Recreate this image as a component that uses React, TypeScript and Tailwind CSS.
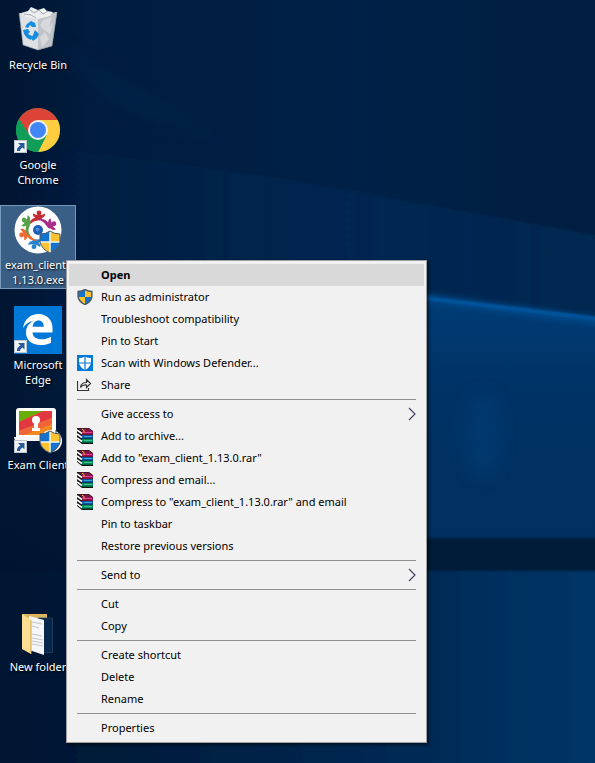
import type { ReactNode } from "react";

function Wallpaper() {
  return (
    <svg className="absolute inset-0 h-full w-full" viewBox="0 0 595 763" preserveAspectRatio="none" aria-hidden="true">
      <defs>
        <linearGradient id="base" x1="0" y1="0" x2="1" y2="0">
          <stop offset="0" stopColor="#001531" />
          <stop offset="0.15" stopColor="#001c3e" />
          <stop offset="0.6" stopColor="#002147" />
          <stop offset="1" stopColor="#001e41" />
        </linearGradient>
        <linearGradient id="haze" x1="0" y1="0" x2="1" y2="0">
          <stop offset="0" stopColor="#003060" stopOpacity="0" />
          <stop offset="0.5" stopColor="#002f60" stopOpacity="0.3" />
          <stop offset="1" stopColor="#003262" stopOpacity="0.5" />
        </linearGradient>
        <linearGradient id="pane" x1="0" y1="0" x2="0" y2="1">
          <stop offset="0" stopColor="#003d77" />
          <stop offset="0.35" stopColor="#003366" />
          <stop offset="1" stopColor="#003060" />
        </linearGradient>
        <linearGradient id="pane2" x1="0" y1="0" x2="1" y2="0">
          <stop offset="0" stopColor="#00152f" />
          <stop offset="0.15" stopColor="#001a38" />
          <stop offset="0.72" stopColor="#002b57" />
          <stop offset="1" stopColor="#003669" />
        </linearGradient>
        <linearGradient id="left" x1="0" y1="0" x2="0" y2="1">
          <stop offset="0" stopColor="#001a38" stopOpacity="0" />
          <stop offset="0.6" stopColor="#001430" stopOpacity="0.9" />
          <stop offset="1" stopColor="#001735" />
        </linearGradient>
        <filter id="wide" x="-100%" y="-100%" width="300%" height="300%">
          <feGaussianBlur stdDeviation="9" />
        </filter>
        <filter id="soft" x="-20%" y="-50%" width="140%" height="200%">
          <feGaussianBlur stdDeviation="3" />
        </filter>
        <filter id="edge" x="-20%" y="-50%" width="140%" height="200%">
          <feGaussianBlur stdDeviation="1" />
        </filter>
      </defs>
      <rect width="595" height="763" fill="url(#base)" />
      <path d="M0 140L280 178L600 236V340H0Z" fill="url(#haze)" filter="url(#edge)" />
      <path d="M50 40L120 82L240 150L110 100Z" fill="#00305c" opacity="0.3" filter="url(#wide)" />
      <rect y="290" width="76" height="473" fill="url(#left)" />
      <path d="M400 294L600 321V539H400Z" fill="url(#pane)" />
      <path d="M400 294L600 321" stroke="#004f94" strokeWidth="6" filter="url(#soft)" />
      <path d="M400 295L600 319" stroke="#0059a3" strokeWidth="3" filter="url(#edge)" />
      <ellipse cx="483" cy="435" rx="17" ry="42" fill="#004480" opacity="0.4" filter="url(#wide)" />
      <rect x="400" y="538" width="200" height="33" fill="#001a38" filter="url(#edge)" />
      <rect x="-10" y="571" width="615" height="202" fill="url(#pane2)" filter="url(#edge)" />
    </svg>
  );
}

function ShortcutArrow() {
  return (
    <g>
      <rect x="0.5" y="34.5" width="12" height="12" fill="#f2f4f6" stroke="#bcc4cc" />
      <path d="M4 37H10.500V43.500L8.500 41.500Q6 42.500 6 45H3Q2.500 41 6.500 39.500Z" fill="#285a9b" />
    </g>
  );
}

function ShieldShape({ line = 1 }: { line?: number }) {
  return (
    <>
      <path d="M10 0Q14 3 20 3V11Q18.500 18 10 22Q1.500 18 0 11V3Q6 3 10 0Z" fill="#ffc32f" />
      <path d="M10 0V11H0V3Q6 3 10 0ZM10 11H20Q18.500 18 10 22Z" fill="#1473cf" />
      {line === 1 && <path d="M10 0V22M0 11H20" stroke="#f3f4ed" strokeWidth="1.500" />}
      <path d="M10 0Q14 3 20 3V11Q18.500 18 10 22Q1.500 18 0 11V3Q6 3 10 0Z" fill="none" stroke="#48596b" strokeWidth={line} />
    </>
  );
}

function DesktopSvg({ children }: { children: ReactNode }) {
  return (
    <svg className="h-12 w-12 shrink-0" viewBox="0 0 48 48" aria-hidden="true">
      {children}
    </svg>
  );
}

function RecycleBinIcon() {
  return (
    <DesktopSvg>
      <path d="M5 7L23 10L43 6L38 40L24 44L9 39Z" fill="#c9cdd2" />
      <path d="M6 7L24 11L24 44L9 39Z" fill="#dfe2e5" />
      <path d="M24 11L43 6L38 40L24 44Z" fill="#c0c4c8" />
      <path d="M7 7L14 5L17 1L24 4L30 2L33 5L39 6L36 10L24 13L13 11Z" fill="#eceeef" />
      <path d="M15 3L20 7L25 4L29 8L34 5M10 8L17 9L22 12" fill="none" stroke="#a7adb3" />
      <path d="M29 14L38 11L35 21L39 17L36 28L29 23L35 33L28 41L26 31L31 26L26 19Z" fill="#dcdfe2" opacity="0.8" />
      <path d="M5 7L9 39L24 44L38 40L43 6" fill="none" stroke="#7b858f" opacity="0.6" />
      <path d="M13 18L17 15L21 17L22 21L18 21L16 19L14 22L11 21ZM9 24L14 23L16 26L14 28L18 30L17 34L13 32L10 28ZM19 29L21 24L25 28L23 32L19 35L17 32Z" fill="#168ce0" />
    </DesktopSvg>
  );
}

function ChromeIcon() {
  return (
    <DesktopSvg>
      <circle cx="24" cy="24" r="22" fill="#0f9d58" />
      <path d="M24 14H43.600A22 22 0 0 1 24 46L32.660 29Z" fill="#ffcd40" />
      <path d="M15.340 29L4.950 13A22 22 0 0 1 43.600 14H24Z" fill="#db4437" />
      <path d="M32.660 29L24 46A22 22 0 0 1 4.950 13L15.340 29L24 34Z" fill="#0f9d58" />
      <circle cx="24" cy="24" r="10" fill="#f1f1f1" />
      <circle cx="24" cy="24" r="8" fill="#4285f4" />
      <ShortcutArrow />
    </DesktopSvg>
  );
}

const people = [
  { angle: 0, color: "#c62b35" },
  { angle: 65, color: "#a72c86" },
  { angle: 190, color: "#2583cf" },
  { angle: 250, color: "#ed6b35" },
  { angle: 302, color: "#54a247" },
];

function ExamExeIcon() {
  return (
    <DesktopSvg>
      <circle cx="24" cy="24" r="23.500" fill="#fff" />
      {people.map((p) => (
        <g key={p.color} transform={`rotate(${p.angle} 24 24)`} fill={p.color}>
          <circle cx="25" cy="7" r="2.400" />
          <path d="M19 7.500Q21.500 9 25 9Q28.500 9 31 7.500Q31.500 10.500 28 12Q27.500 14 24 14.500Q18 15 14.500 20Q15 13.500 21.500 11.500Q18.500 10.500 19 7.500Z" />
        </g>
      ))}
      <circle cx="24" cy="24" r="5" fill="#1c5cb4" />
      <circle cx="23.500" cy="23.500" r="2" fill="#4a8edd" />
      <g transform="translate(26 25)">
        <ShieldShape />
      </g>
    </DesktopSvg>
  );
}

function EdgeIcon() {
  return (
    <DesktopSvg>
      <rect width="48" height="48" fill="#0078d7" />
      <path d="M9 22C10.500 13 16.500 8 24.500 8C33.500 8 38.500 14.500 38.500 22V26.500H18.500C18.800 31 22.500 33.300 27.500 33.300C31.500 33.300 34.500 32.200 37 30.700V36.700C34 38.300 30.500 39 26.500 39C17.500 39 12 34 12 26.500C12 21.500 14.500 17.500 19 15C15 15.500 11.500 18 9 22ZM18.700 20.800H29.800C29.800 17 27.800 14.600 24.600 14.600C21.200 14.600 19 17 18.700 20.800Z" fill="#fff" />
      <ShortcutArrow />
    </DesktopSvg>
  );
}

function ExamClientIcon() {
  return (
    <DesktopSvg>
      <rect x="2" y="2" width="40" height="31" rx="3" fill="#fff" />
      <path d="M0 31H46L41 35H1Z" fill="#f7f7f7" />
      <rect x="5" y="5" width="33" height="24" fill="#f28a20" />
      <path d="M5 5H29L5 16Z" fill="#69ae08" />
      <path d="M5 16L29 5H38V12L5 25Z" fill="#e23840" />
      <path d="M5 25L38 12V18L10 29H5Z" fill="#ee6638" />
      <circle cx="22" cy="14" r="4" fill="#fff" />
      <path d="M20 15H24V22H26V25H18V22H20Z" fill="#fff" />
      <circle cx="37" cy="35" r="11" fill="#fff" />
      <path d="M42 24V28H46" fill="none" stroke="#34495c" />
      <g transform="translate(26 25)">
        <ShieldShape />
      </g>
      <ShortcutArrow />
    </DesktopSvg>
  );
}

function FolderIcon() {
  return (
    <DesktopSvg>
      <path d="M8 6H33V12L27 44L8 41Z" fill="#dcb65d" />
      <path d="M24 10H38.500V44.500H28Z" fill="#06264b" stroke="#294866" strokeWidth="0.700" />
      <path d="M15 8L30 12V47L15 42Z" fill="#f5f6f7" />
      <path d="M18 14L28 16M18 18L25 20M18 26L28 28M18 30L29 32M18 33L29 35M18 36L29 38" stroke="#c3c6c9" strokeWidth="1" />
      <path d="M8 6L17 12V46L8 41Z" fill="#ffe092" />
      <path d="M17 12V46" stroke="#cea84f" />
    </DesktopSvg>
  );
}

function MenuSvg({ children }: { children: ReactNode }) {
  return (
    <svg className="h-4 w-4" viewBox="0 0 16 16" aria-hidden="true">
      {children}
    </svg>
  );
}

function AdminShield() {
  return (
    <MenuSvg>
      <g transform="translate(1.100 0.400) scale(0.690)">
        <ShieldShape line={2} />
      </g>
    </MenuSvg>
  );
}

function DefenderIcon() {
  return (
    <MenuSvg>
      <rect width="16" height="16" fill="#0078d7" />
      <path d="M8 1.500Q10.500 3 14 3V8Q13 12.500 8 15Q3 12.500 2 8V3Q5.500 3 8 1.500Z" fill="#fff" />
      <path d="M8 1V15M1 8H15" stroke="#0078d7" strokeWidth="1.200" />
    </MenuSvg>
  );
}

function ShareIcon() {
  return (
    <MenuSvg>
      <path d="M0.500 4V13.500H11.500V11M3.500 10.500Q4 5.500 9.500 5.500V2.500L13.500 6.500L9.500 10.500V8Q5.500 7.500 3.500 10.500Z" fill="none" stroke="#333" strokeWidth="1.200" />
    </MenuSvg>
  );
}

const books = [
  { y: 3, color: "#97104f", light: "#e33b92" },
  { y: 7, color: "#07549d", light: "#3aa5dc" },
  { y: 11, color: "#008753", light: "#3bc795" },
];

function RarIcon() {
  return (
    <MenuSvg>
      <path d="M0 0H12L16 3V16H5L0 12Z" fill="#151515" />
      <path d="M1 0.500H11.500L15 3H5Z" fill="#7f1648" />
      {books.map((book) => (
        <g key={book.y}>
          <path d={`M5 ${book.y}H16V${book.y + 4}H5Z`} fill={book.color} />
          <path d={`M7 ${book.y + 1.5}H15`} stroke={book.light} />
          <path d={`M0 ${book.y - 1}L5 ${book.y + 2.5}`} stroke="#fff" strokeWidth="1.600" />
          <path d={`M5 ${book.y + 4}H16`} stroke="#151515" strokeWidth="0.700" />
        </g>
      ))}
      <path d="M5 1L7 2.500V5" fill="none" stroke="#e8c52c" />
    </MenuSvg>
  );
}

function DesktopItem({ icon, lines, selected = false }: { icon: ReactNode; lines: string[]; selected?: boolean }) {
  return (
    <button
      type="button"
      className={`flex h-[84px] w-[76px] flex-col items-center border text-[11px] leading-[15px] text-white ${
        selected ? "border-[#7699bc] bg-[#3a5f87]" : "border-transparent"
      }`}
    >
      {icon}
      <span className="mt-[3px] flex flex-col items-center whitespace-nowrap [text-shadow:1px_1px_2px_#000]">
        {lines.map((line) => (
          <span key={line}>{line}</span>
        ))}
      </span>
    </button>
  );
}

function MenuItem({ children, icon, bold = false, submenu = false }: { children: ReactNode; icon?: ReactNode; bold?: boolean; submenu?: boolean }) {
  return (
    <button
      type="button"
      role="menuitem"
      className={`flex h-[22px] w-full items-center px-2 text-left text-black ${bold ? "bg-[#d9d9d9] font-bold" : ""}`}
    >
      <span className="w-6 shrink-0">{icon}</span>
      <span className="flex-1 whitespace-nowrap">{children}</span>
      {submenu && (
        <svg className="h-4 w-2" viewBox="0 0 8 16" aria-hidden="true">
          <path d="M1 2L7 8L1 14" fill="none" stroke="#444267" strokeWidth="1.200" />
        </svg>
      )}
    </button>
  );
}

function Separator() {
  return (
    <div role="separator" className="flex h-[7px] items-center px-2">
      <div className="h-px w-full bg-[#919191]" />
    </div>
  );
}

export default function App() {
  return (
    <main className="relative min-h-screen overflow-hidden bg-[#001a38] font-['Noto_Sans','Open_Sans',sans-serif]">
      <Wallpaper />
      <div className="relative flex flex-col items-start gap-4 pt-[5px]">
        <DesktopItem icon={<RecycleBinIcon />} lines={["Recycle Bin"]} />
        <DesktopItem icon={<ChromeIcon />} lines={["Google", "Chrome"]} />
        <DesktopItem selected icon={<ExamExeIcon />} lines={["exam_client_", "1.13.0.exe"]} />
        <DesktopItem icon={<EdgeIcon />} lines={["Microsoft", "Edge"]} />
        <DesktopItem icon={<ExamClientIcon />} lines={["Exam Client"]} />
        <div className="h-[86px]" />
        <DesktopItem icon={<FolderIcon />} lines={["New folder"]} />
      </div>
      <div
        role="menu"
        aria-label="File actions"
        className="absolute top-[260px] left-[66px] w-[361px] border border-[#a0a0a0] bg-[#f1f1f1] px-0.5 py-[3px] text-[11px] shadow-[2px_2px_3px_#0008]"
      >
        <MenuItem bold>Open</MenuItem>
        <MenuItem icon={<AdminShield />}>Run as administrator</MenuItem>
        <MenuItem>Troubleshoot compatibility</MenuItem>
        <MenuItem>Pin to Start</MenuItem>
        <MenuItem icon={<DefenderIcon />}>Scan with Windows Defender...</MenuItem>
        <MenuItem icon={<ShareIcon />}>Share</MenuItem>
        <Separator />
        <MenuItem submenu>Give access to</MenuItem>
        <MenuItem icon={<RarIcon />}>Add to archive...</MenuItem>
        <MenuItem icon={<RarIcon />}>Add to "exam_client_1.13.0.rar"</MenuItem>
        <MenuItem icon={<RarIcon />}>Compress and email...</MenuItem>
        <MenuItem icon={<RarIcon />}>Compress to "exam_client_1.13.0.rar" and email</MenuItem>
        <MenuItem>Pin to taskbar</MenuItem>
        <MenuItem>Restore previous versions</MenuItem>
        <Separator />
        <MenuItem submenu>Send to</MenuItem>
        <Separator />
        <MenuItem>Cut</MenuItem>
        <MenuItem>Copy</MenuItem>
        <Separator />
        <MenuItem>Create shortcut</MenuItem>
        <MenuItem>Delete</MenuItem>
        <MenuItem>Rename</MenuItem>
        <Separator />
        <MenuItem>Properties</MenuItem>
      </div>
    </main>
  );
}
